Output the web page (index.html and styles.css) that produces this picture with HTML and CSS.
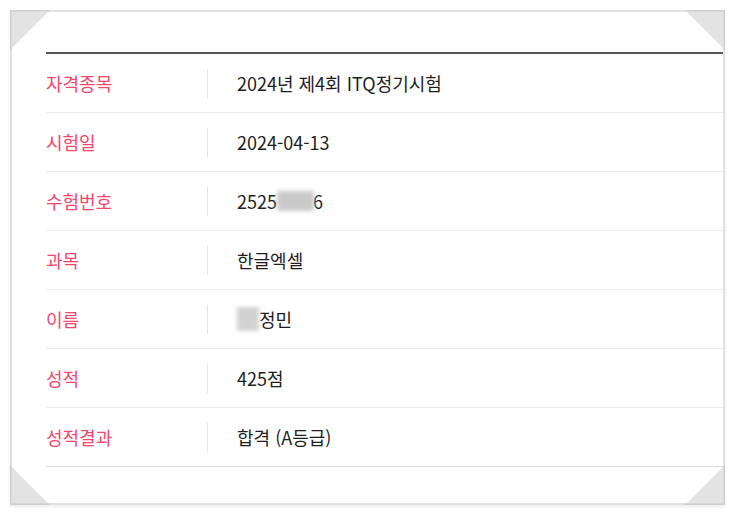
FILE: index.html
```html
<!DOCTYPE html>
<html lang="ko">
<head>
<meta charset="utf-8">
<link rel="stylesheet" href="styles.css">
</head>
<body>
<div class="frame">
  <svg class="corner tl" width="40" height="40" viewBox="0 0 40 40"><polygon points="0,0 40,0 0,40" class="tri"/><polyline points="0,40 0,0 40,0" class="edge"/></svg>
  <svg class="corner tr" width="40" height="40" viewBox="0 0 40 40"><polygon points="0,0 40,0 40,40" class="tri"/><polyline points="0,0 40,0 40,40" class="edge"/></svg>
  <svg class="corner bl" width="40" height="40" viewBox="0 0 40 40"><polygon points="0,0 0,40 40,40" class="tri"/><polyline points="0,0 0,40 40,40" class="edge"/></svg>
  <svg class="corner br" width="40" height="40" viewBox="0 0 40 40"><polygon points="40,0 40,40 0,40" class="tri"/><polyline points="40,0 40,40 0,40" class="edge"/></svg>
  <div class="table">
    <div class="row"><div class="label">자격종목</div><div class="value">2024년 제4회 ITQ정기시험</div></div>
    <div class="row"><div class="label">시험일</div><div class="value">2024-04-13</div></div>
    <div class="row"><div class="label">수험번호</div><div class="value">2525<span class="blur b1"></span>6</div></div>
    <div class="row"><div class="label">과목</div><div class="value">한글엑셀</div></div>
    <div class="row"><div class="label">이름</div><div class="value"><span class="blur b2"></span>정민</div></div>
    <div class="row"><div class="label">성적</div><div class="value">425점</div></div>
    <div class="row"><div class="label">성적결과</div><div class="value">합격 (A등급)</div></div>
  </div>
</div>
</body>
</html>
```
FILE: styles.css
```css
html, body {
  margin: 0;
  padding: 0;
  background: #fff;
}
body {
  font-family: "Noto Sans CJK KR", "Noto Sans", sans-serif;
}
.frame {
  position: relative;
  margin: 10px;
  border: 2px solid #e1e1e1;
  box-shadow: 0 2px 3px rgba(0,0,0,0.08);
  padding: 40px 0 0 34px;
  box-sizing: content-box;
  width: 677px;
  height: 451px;
}
.corner {
  position: absolute;
  display: block;
}
.corner .tri { fill: #e3e3e3; }
.corner .edge { fill: none; stroke: #cfcfcf; stroke-width: 3; }
.tl { top: -2px; left: -2px; }
.tr { top: -2px; right: -2px; }
.bl { bottom: -2px; left: -2px; }
.br { bottom: -2px; right: -2px; }
.table {
  border-top: 2px solid #555;
  border-bottom: 1px solid #dcdcdc;
}
.row {
  display: flex;
  align-items: center;
  height: 58px;
  border-top: 1px solid #ececec;
}
.row:first-child { border-top: none; }
.label {
  width: 161px;
  color: #f5476b;
  font-size: 18px;
  line-height: 29px;
  border-right: 1px solid #e4e4e4;
  flex: none;
}
.value {
  padding-left: 29px;
  color: #1e1e1e;
  font-size: 18px;
  line-height: 29px;
  display: flex;
  align-items: center;
}
.blur {
  display: inline-block;
  background: #c9c9c9;
  filter: blur(2px);
  height: 20px;
}
.b1 { width: 37px; margin: 0 -1px 0 0; }
.b2 { width: 22px; height: 24px; background: #d2d2d2; }
```
